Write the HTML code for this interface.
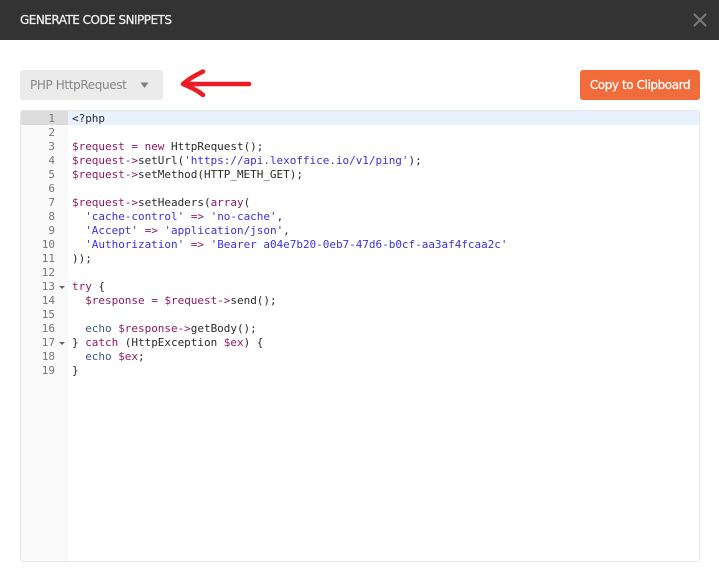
<!DOCTYPE html>
<html><head><meta charset="utf-8">
<style>
html,body{margin:0;padding:0;width:719px;height:582px;overflow:hidden;background:#fff}
*{box-sizing:border-box}
.hdr{position:absolute;left:0;top:0;width:719px;height:40px;background:#333}
.ttl{position:absolute;left:20px;top:13px;font:12px/15px "DejaVu Sans",sans-serif;color:#f0f0f0;letter-spacing:-.52px;white-space:nowrap;-webkit-text-stroke:.25px #f0f0f0}
.sel{position:absolute;left:20px;top:70px;width:143px;height:30px;background:#ebebeb;border-radius:3px}
.sel span{position:absolute;left:10px;top:8px;font:12px/15px "DejaVu Sans",sans-serif;color:#858585;letter-spacing:-.38px;white-space:nowrap}
.btn{position:absolute;left:580px;top:70px;width:120px;height:30px;background:#f26b3a;border-radius:3px;color:#fff;font:12px/30px "DejaVu Sans",sans-serif;letter-spacing:-.42px;text-align:center;white-space:nowrap;-webkit-text-stroke:.25px #fff}
.ed{position:absolute;left:20px;top:110px;width:680px;height:452px;border:1px solid #e6e6e6;border-radius:3px;overflow:hidden;background:#fff}
.gut{position:absolute;left:0;top:0;width:47px;height:450px;background:#fafafa}
.ag{position:absolute;left:0;top:0;width:47px;height:14px;background:#dcdcdc}
.al{position:absolute;left:47px;top:0;width:632px;height:14px;background:#e8f2fe}
.nums,.code{position:absolute;top:1px;margin:0;font:11px/14px "DejaVu Sans Mono",monospace;white-space:pre;letter-spacing:-.025px}
.nums{left:0;width:34px;text-align:right;color:#777}
.code{left:51px;color:#2a2a2a}
.v{color:#8f1a63}.s{color:#3a32dc}.k{color:#8f1a63}.e{color:#3f5a86}
.f{position:absolute;left:38px;width:0;height:0;border-left:3px solid transparent;border-right:3px solid transparent;border-top:3px solid #666}
svg{position:absolute}
</style></head><body>
<div class="hdr"><div class="ttl">GENERATE CODE SNIPPETS</div>
<svg style="left:692px;top:12px" width="16" height="16" viewBox="0 0 16 16"><path d="M2 2L14 14M14 2L2 14" stroke="#7a7a7a" stroke-width="2" fill="none"/></svg></div>
<div class="sel"><span>PHP HttpRequest</span>
<svg style="left:120px;top:12px" width="10" height="7" viewBox="0 0 10 7"><path d="M0.5 0.5H8.5L4.5 6z" fill="#808080"/></svg></div>
<svg style="left:178px;top:66px" width="78" height="34" viewBox="0 0 78 34"><path d="M5 18H71M5 18C12 12 18 9 25 5.5M5 18C12 21 19 24 25 29" stroke="#ed1c24" stroke-width="4.6" stroke-linecap="round" fill="none"/></svg>
<div class="btn">Copy to Clipboard</div>
<div class="ed">
<div class="gut"></div><div class="ag"></div><div class="al"></div>
<pre class="nums">1
2
3
4
5
6
7
8
9
10
11
12
13
14
15
16
17
18
19</pre>
<div class="f" style="top:175px"></div><div class="f" style="top:231px"></div>
<pre class="code">&lt;?php

<span class="v">$request</span> <span class="k">=</span> <span class="k">new</span> HttpRequest();
<span class="v">$request-&gt;</span>setUrl(<span class="s">'https://api.lexoffice.io/v1/ping'</span>);
<span class="v">$request-&gt;</span>setMethod(HTTP_METH_GET);

<span class="v">$request-&gt;</span>setHeaders(<span class="k">array</span>(
  <span class="s">'cache-control'</span> <span class="k">=&gt;</span> <span class="s">'no-cache'</span>,
  <span class="s">'Accept'</span> <span class="k">=&gt;</span> <span class="s">'application/json'</span>,
  <span class="s">'Authorization'</span> <span class="k">=&gt;</span> <span class="s">'Bearer a04e7b20-0eb7-47d6-b0cf-aa3af4fcaa2c'</span>
));

<span class="k">try</span> {
  <span class="v">$response</span> <span class="k">=</span> <span class="v">$request-&gt;</span>send();

  <span class="e">echo</span> <span class="v">$response-&gt;</span>getBody();
} <span class="k">catch</span> (HttpException <span class="v">$ex</span>) {
  <span class="e">echo</span> <span class="v">$ex</span>;
}</pre>
</div>
</body></html>
